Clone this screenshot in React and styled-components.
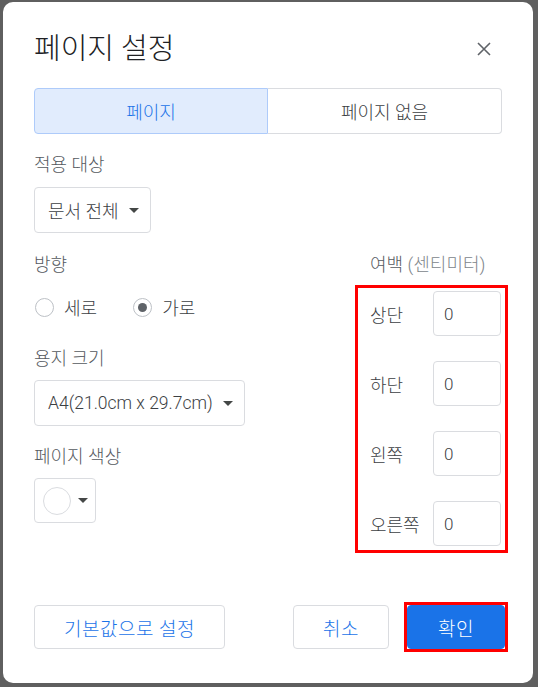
import styled, { createGlobalStyle } from "styled-components";

const GlobalStyle = createGlobalStyle`
  html, body {
    margin: 0;
    padding: 0;
    background: #5f5f5f;
  }
  body {
    width: 538px;
    height: 687px;
    overflow: hidden;
    font-family: Roboto, "Noto Sans CJK KR", "Noto Sans", sans-serif;
  }
  * { box-sizing: border-box; }
`;

const Page = styled.div`
  padding: 2px 0 0 3px;
`;

const Dialog = styled.div`
  width: 530px;
  height: 681px;
  background: #ffffff;
  border-radius: 10px;
  padding: 18px 31px 31px;
  display: flex;
  flex-direction: column;
`;

const Header = styled.div`
  height: 58px;
  display: flex;
  align-items: center;
  justify-content: space-between;
`;

const Title = styled.h1`
  margin: 0;
  font-size: 29px;
  font-weight: 300;
  color: #202124;
  line-height: 34px;
`;

const CloseButton = styled.button`
  width: 24px;
  height: 24px;
  margin-right: 6px;
  border: none;
  background: none;
  padding: 0;
  display: flex;
  align-items: center;
  justify-content: center;
`;

const Tabs = styled.div`
  margin-top: 10px;
  display: grid;
  grid-template-columns: 1fr 1fr;
  height: 46px;
`;

const Tab = styled.div`
  display: flex;
  align-items: center;
  justify-content: center;
  font-size: 18px;
  font-weight: 300;
  border: 1px solid ${(p) => (p.$active ? "#aecbfa" : "#dadce0")};
  background: ${(p) => (p.$active ? "#e1ecfd" : "#ffffff")};
  color: ${(p) => (p.$active ? "#1a73e8" : "#3c4043")};
  border-radius: ${(p) => (p.$active ? "4px 0 0 4px" : "0 4px 4px 0")};
  ${(p) => !p.$active && "border-left: none;"}
`;

const Body = styled.div`
  margin-top: 19px;
  display: grid;
  grid-template-columns: 321px 153px;
`;

const Column = styled.div`
  display: flex;
  flex-direction: column;
  padding-top: ${(p) => p.$offset || 0}px;
`;

const Field = styled.div`
  display: flex;
  flex-direction: column;
  align-items: flex-start;
  gap: ${(p) => p.$gap || 10}px;
  margin-bottom: ${(p) => p.$after || 20}px;
`;

const Label = styled.div`
  font-size: 18px;
  font-weight: 300;
  line-height: 24px;
  color: #55595e;
  padding-left: ${(p) => p.$indent || 0}px;
`;

const Hint = styled.span`
  color: #80868b;
`;

const Select = styled.div`
  height: 46px;
  display: flex;
  align-items: center;
  gap: ${(p) => p.$gap || 10}px;
  padding: 0 ${(p) => p.$right || 11}px 0 ${(p) => p.$left || 13}px;
  border: 1px solid #dadce0;
  border-radius: 4px;
  font-size: ${(p) => p.$size || 18}px;
  font-weight: 300;
  color: #3c4043;
`;

const Caret = styled.span`
  width: 0;
  height: 0;
  border-left: 5px solid transparent;
  border-right: 5px solid transparent;
  border-top: 5px solid #444746;
`;

const Swatch = styled.span`
  width: 28px;
  height: 28px;
  border-radius: 50%;
  border: 1px solid #dadce0;
  background: #ffffff;
`;

const RadioGroup = styled.div`
  display: flex;
  gap: 35px;
  height: 24px;
  align-items: center;
`;

const RadioOption = styled.label`
  display: flex;
  align-items: center;
  gap: 10px;
  font-size: 18px;
  font-weight: 300;
  color: #3c4043;
  padding-left: 1px;
`;

const RadioCircle = styled.span`
  width: 19px;
  height: 19px;
  border-radius: 50%;
  border: 1px solid #bdc1c6;
  display: flex;
  align-items: center;
  justify-content: center;
  &::after {
    content: "";
    width: 9px;
    height: 9px;
    border-radius: 50%;
    background: ${(p) => (p.$checked ? "#5f6368" : "transparent")};
  }
`;

const MarginBox = styled.div`
  margin-top: 8px;
  border: 3px solid #ff0000;
  padding: 3px 4px 4px 12px;
  display: flex;
  flex-direction: column;
  gap: 25px;
`;

const MarginRow = styled.div`
  display: flex;
  align-items: center;
  justify-content: space-between;
  height: 45px;
`;

const RowLabel = styled.span`
  font-size: 18px;
  font-weight: 300;
  color: #3c4043;
`;

const NumberInput = styled.div`
  width: 68px;
  height: 45px;
  border: 1px solid #dadce0;
  border-radius: 4px;
  display: flex;
  align-items: center;
  padding-left: 10px;
  font-size: 17px;
  font-weight: 300;
  color: #3c4043;
`;

const Footer = styled.div`
  margin-top: auto;
  display: flex;
  align-items: center;
`;

const Button = styled.button`
  height: 44px;
  width: ${(p) => p.$width}px;
  border: 1px solid ${(p) => (p.$primary ? "#1a73e8" : "#dadce0")};
  background: ${(p) => (p.$primary ? "#1a73e8" : "#ffffff")};
  color: ${(p) => (p.$primary ? "#ffffff" : "#1a73e8")};
  border-radius: 4px;
  font-family: inherit;
  font-size: 19px;
  font-weight: 300;
  letter-spacing: 0.5px;
  padding: 0;
`;

const Spacer = styled.div`
  flex: 1;
`;

const Highlight = styled.div`
  margin-left: 15px;
  border: 3px solid #ff0000;
  display: flex;
  margin-right: -6px;
`;

const margins = ["상단", "하단", "왼쪽", "오른쪽"];

export default function App() {
  return (
    <>
      <GlobalStyle />
      <Page>
        <Dialog>
          <Header>
            <Title>페이지 설정</Title>
            <CloseButton aria-label="닫기">
              <svg width="14" height="14" viewBox="0 0 14 14">
                <path
                  d="M1 1 L13 13 M13 1 L1 13"
                  stroke="#5f6368"
                  strokeWidth="1.6"
                  fill="none"
                />
              </svg>
            </CloseButton>
          </Header>

          <Tabs>
            <Tab $active>페이지</Tab>
            <Tab>페이지 없음</Tab>
          </Tabs>

          <Body>
            <Column>
              <Field>
                <Label>적용 대상</Label>
                <Select>
                  문서 전체 <Caret />
                </Select>
              </Field>
              <Field $gap={18} $after={28}>
                <Label>방향</Label>
                <RadioGroup>
                  <RadioOption>
                    <RadioCircle />
                    세로
                  </RadioOption>
                  <RadioOption>
                    <RadioCircle $checked />
                    가로
                  </RadioOption>
                </RadioGroup>
              </Field>
              <Field $gap={9} $after={19}>
                <Label>용지 크기</Label>
                <Select $size={17.5}>
                  A4(21.0cm x 29.7cm) <Caret />
                </Select>
              </Field>
              <Field $gap={9}>
                <Label>페이지 색상</Label>
                <Select $left={8} $right={7} $gap={7} style={{ height: 45 }}>
                  <Swatch />
                  <Caret />
                </Select>
              </Field>
            </Column>

            <Column $offset={100}>
              <Label $indent={15}>
                여백 <Hint>(센티미터)</Hint>
              </Label>
              <MarginBox>
                {margins.map((m) => (
                  <MarginRow key={m}>
                    <RowLabel>{m}</RowLabel>
                    <NumberInput>0</NumberInput>
                  </MarginRow>
                ))}
              </MarginBox>
            </Column>
          </Body>

          <Footer>
            <Button $width={191}>기본값으로 설정</Button>
            <Spacer />
            <Button $width={96}>취소</Button>
            <Highlight>
              <Button $primary $width={98}>
                확인
              </Button>
            </Highlight>
          </Footer>
        </Dialog>
      </Page>
    </>
  );
}
